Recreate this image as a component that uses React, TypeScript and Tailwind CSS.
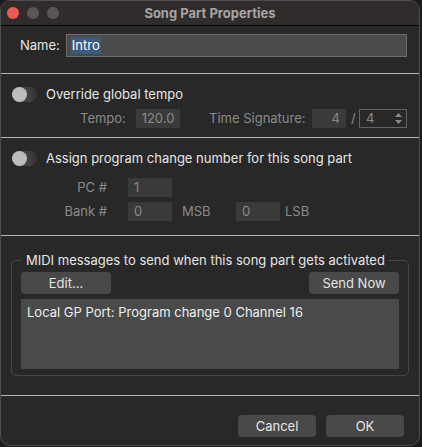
function Toggle() {
  return (
    <div className="relative w-[25px] h-[15px] rounded-full bg-gradient-to-r from-[#5a5a5a] to-[#333333]">
      <div className="absolute left-0 top-0 w-[15px] h-[15px] rounded-full bg-[#bdbdbd]" />
    </div>
  );
}

function Field({ value, className }: { value: string; className: string }) {
  return (
    <div className={`h-[19px] bg-[#3a3a3a] text-[#8a8a8a] flex items-center ${className}`}>{value}</div>
  );
}

function Button({ label, className }: { label: string; className: string }) {
  return (
    <div className={`h-[22px] rounded-[4px] bg-[#494949] text-[#e4e4e4] flex items-center justify-center ${className}`}>
      {label}
    </div>
  );
}

export default function App() {
  return (
    <div
      className="w-[422px] h-[447px] bg-[#1b1b1b] text-[13px] leading-none"
      style={{ fontFamily: "Inter, 'Noto Sans', sans-serif" }}
    >
      <div className="w-[420px] h-[446px] bg-[#282828] rounded-[10px] border border-[#4d4d4d] overflow-hidden flex flex-col">
        {/* Title bar */}
        <div className="h-[25px] shrink-0 bg-[#302c2c] border-b border-black grid grid-cols-[1fr_auto_1fr] items-center">
          <div className="flex gap-[8px] pl-[6px]">
            <div className="w-[12px] h-[12px] rounded-full bg-[#ee5a52]" />
            <div className="w-[12px] h-[12px] rounded-full bg-[#5a5656]" />
            <div className="w-[12px] h-[12px] rounded-full bg-[#5a5656]" />
          </div>
          <div className="font-bold text-[#a8a4a4]">Song Part Properties</div>
          <div />
        </div>

        {/* Name */}
        <div className="h-[47px] shrink-0 pt-[8px] flex items-start">
          <div className="h-[23px] flex items-center gap-[6px] pl-[19px]">
            <span className="text-[#e6e6e6]">Name:</span>
            <div className="w-[341px] h-[23px] bg-[#4a4a4a] border border-[#6c6c6c] flex items-center px-[4px]">
              <span className="bg-[#3e5b7c] text-white px-[1px] py-[2px]">Intro</span>
            </div>
          </div>
        </div>
        <div className="h-px shrink-0 bg-[#b4b4b4]" />

        {/* Tempo */}
        <div className="h-[63px] shrink-0 flex flex-col">
          <div className="flex items-center gap-[9px] pl-[11px] mt-[13px]">
            <Toggle />
            <span className="text-[#e6e6e6]">Override global tempo</span>
          </div>
          <div className="flex items-center mt-[7px] text-[#8a8a8a]">
            <span className="ml-[79px] w-[56px]">Tempo:</span>
            <Field value="120.0" className="w-[44px] justify-center" />
            <span className="ml-[29px] w-[103px]">Time Signature:</span>
            <Field value="4" className="w-[34px] justify-end pr-[6px]" />
            <span className="ml-[5px] w-[8px]">/</span>
            <div className="h-[19px] w-[48px] border border-[#636363] flex items-center justify-between pl-[6px] pr-[4px]">
              <span>4</span>
              <svg width="7" height="11" viewBox="0 0 7 11" fill="#8a8a8a">
                <path d="M3.5 0 L7 4 H0 Z" />
                <path d="M0 7 H7 L3.5 11 Z" />
              </svg>
            </div>
          </div>
        </div>
        <div className="h-px shrink-0 bg-[#b4b4b4]" />

        {/* Program change */}
        <div className="h-[97px] shrink-0 flex flex-col">
          <div className="flex items-center gap-[9px] pl-[11px] mt-[13px]">
            <Toggle />
            <span className="text-[#e6e6e6]">Assign program change number for this song part</span>
          </div>
          <div className="flex items-center mt-[12px] text-[#8a8a8a]">
            <span className="w-[106px] text-right">PC #</span>
            <Field value="1" className="ml-[21px] w-[44px] pl-[6px]" />
          </div>
          <div className="flex items-center mt-[5px] text-[#8a8a8a]">
            <span className="w-[106px] text-right">Bank #</span>
            <Field value="0" className="ml-[21px] w-[44px] pl-[6px]" />
            <span className="ml-[10px] w-[54px]">MSB</span>
            <Field value="0" className="w-[44px] pl-[6px]" />
            <span className="ml-[5px]">LSB</span>
          </div>
        </div>
        <div className="h-px shrink-0 bg-[#b4b4b4]" />

        {/* MIDI messages */}
        <div className="h-[159px] shrink-0 pt-[24px] px-[10px]">
          <div className="h-[116px] border border-[#474747] rounded-[5px] flex flex-col px-[9px]">
            <div className="-mt-[7px] flex">
              <span className="bg-[#282828] text-[#e6e6e6] pl-[5px] pr-[4px]">
                MIDI messages to send when this song part gets activated
              </span>
            </div>
            <div className="flex justify-between mt-[5px]">
              <Button label="Edit..." className="w-[90px]" />
              <Button label="Send Now" className="w-[90px]" />
            </div>
            <div className="mt-[5px] h-[70px] bg-[#4a4a4a] px-[6px] pt-[7px] text-[#eeeeee]">
              Local GP Port: Program change 0 Channel 16
            </div>
          </div>
        </div>
        <div className="h-px shrink-0 bg-[#b4b4b4]" />

        {/* Footer */}
        <div className="flex justify-end gap-[10px] pr-[15px] pt-[19px]">
          <Button label="Cancel" className="w-[78px]" />
          <Button label="OK" className="w-[78px]" />
        </div>
      </div>
    </div>
  );
}
